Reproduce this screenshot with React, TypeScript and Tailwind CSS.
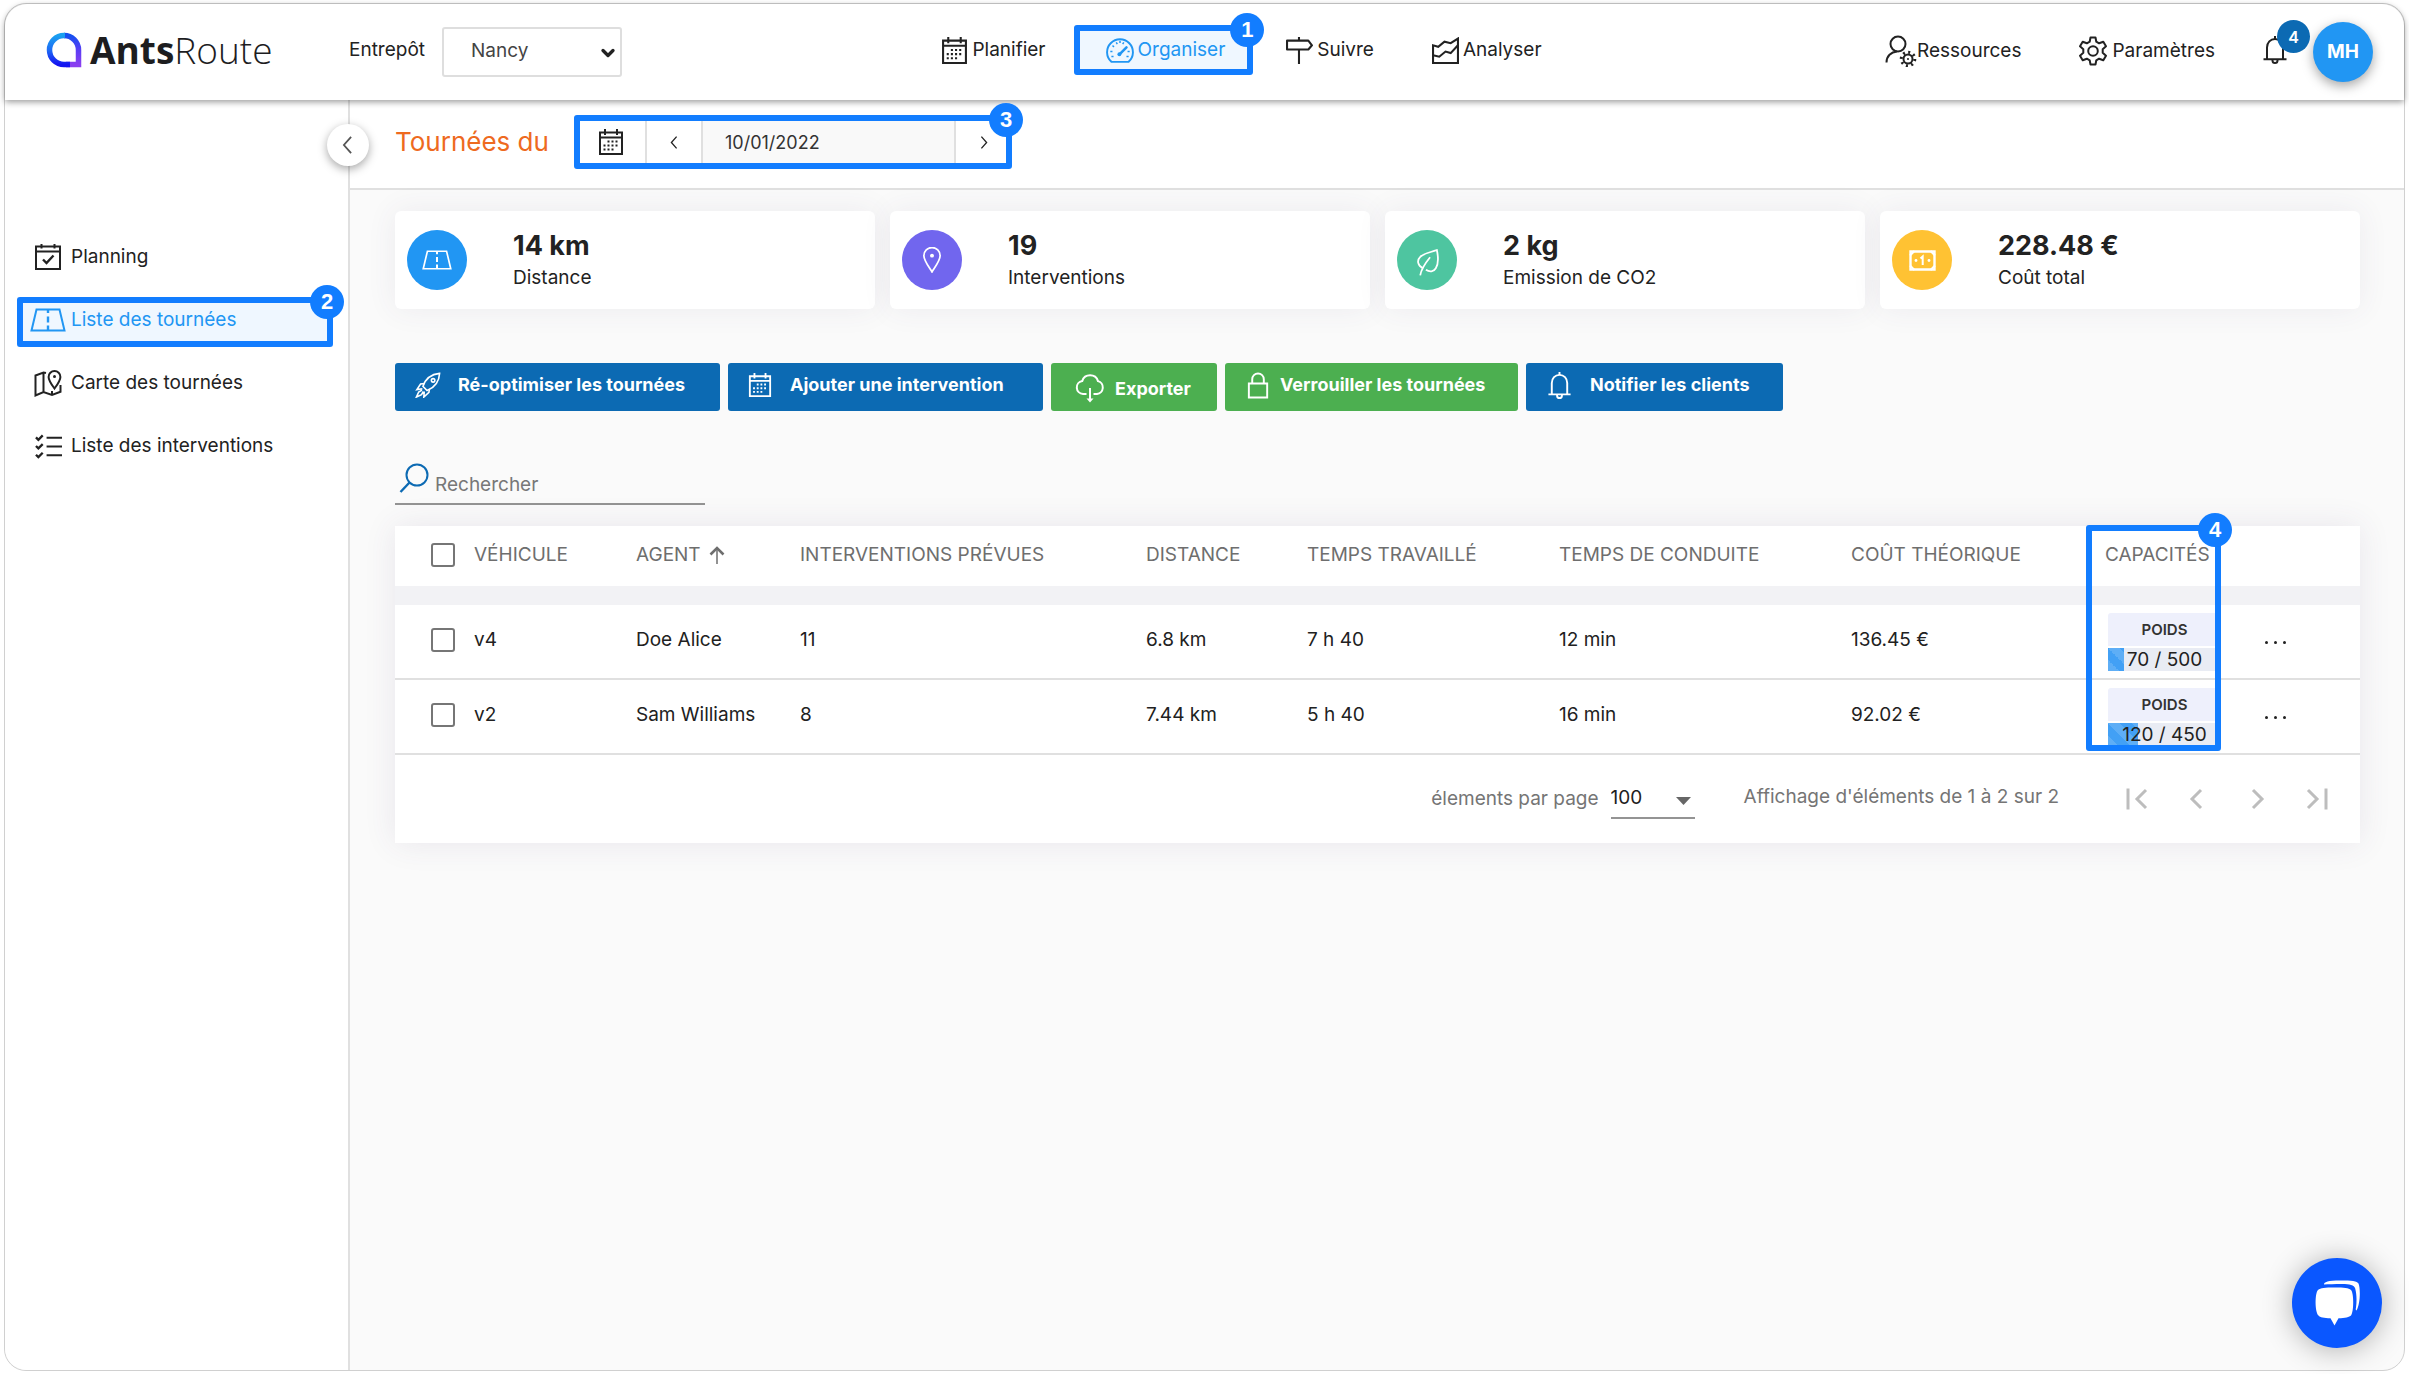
import type { ReactNode } from "react";
import { ChevronDown } from "lucide-react";

type IconProps = { className?: string };

function Icon({
  box = 26,
  stroke = 2,
  className = "",
  children,
}: {
  box?: number;
  stroke?: number;
  className?: string;
  children: ReactNode;
}) {
  return (
    <svg
      viewBox={`0 0 ${box} ${box}`}
      fill="none"
      stroke="currentColor"
      strokeWidth={stroke}
      className={`shrink-0 ${className}`}
      aria-hidden="true"
    >
      {children}
    </svg>
  );
}

function CalendarIcon({ className }: IconProps) {
  return (
    <Icon className={className}>
      <path d="M2 3.500h22V25H2zM2 8.500h22" />
      <path d="M7 0v6M19 0v6" />
      <path d="M9.500 12.500h12M5.500 16.500h16M5.500 20.500h12" strokeDasharray="2 2" />
    </Icon>
  );
}

function GaugeIcon({ className }: IconProps) {
  return (
    <Icon className={className}>
      <path d="M5 24a12 12 0 1 1 16 0z" strokeWidth="1.8" />
      <path d="M12.500 17L19 10.500" strokeWidth="2.4" strokeLinecap="round" />
      <circle cx="12.400" cy="17" r="1.800" fill="currentColor" stroke="none" />
      <path d="M4 14.500h2M20 14.500h2M5 19h2M19 19h2M6 9l1.500 1M9.500 6l1 1.600M13 4.500v2M16.500 6l-1 1.600" strokeWidth="1.4" />
    </Icon>
  );
}

function SignpostIcon({ className }: IconProps) {
  return (
    <Icon className={className}>
      <path d="M1 3.500h20.500L25 8l-3.500 4H1z" strokeLinejoin="round" />
      <path d="M12.500 0v3.500M12.500 12v14" />
    </Icon>
  );
}

function ChartIcon({ className }: IconProps) {
  return (
    <Icon className={className}>
      <path d="M1 25V8l5 1.500L12 4.500l6 1.500 7-4.500V25z" />
      <path d="M1 17.500l6 1.500 6-5 5 1.500L25 8" />
    </Icon>
  );
}

function UserGearIcon({ className }: IconProps) {
  return (
    <Icon box={32} className={className}>
      <circle cx="13" cy="9" r="7.500" />
      <path d="M1.500 27.500C1.500 21 6 17 12 16.500" />
      <circle cx="23" cy="24" r="4.500" />
      <circle cx="23" cy="24" r="1" fill="currentColor" stroke="none" />
      <circle cx="23" cy="24" r="6.800" strokeDasharray="2 3.340" strokeWidth="3" />
    </Icon>
  );
}

function GearIcon({ className }: IconProps) {
  return (
    <Icon box={30} className={className}>
      <circle cx="15" cy="15" r="4.800" />
      <path
        strokeLinejoin="round"
        d="M12.500 1.500h5l.8 4.200 2.800 1.600 4.200-1.600 2.700 4.600-3.300 2.900v3.600l3.300 2.900-2.700 4.600-4.200-1.600-2.800 1.600-.8 4.200h-5l-.8-4.200-2.800-1.600-4.200 1.600L2 19.700l3.300-2.900v-3.600L2 10.300l2.700-4.600 4.200 1.600 2.800-1.600z"
      />
    </Icon>
  );
}

function BellIcon({ className }: IconProps) {
  return (
    <Icon box={28} className={className}>
      <path d="M6 23V11.500C6 6.500 9.500 3 14 3s8 3.500 8 8.500V23" />
      <path d="M2.500 23.200h23M14 0v3" />
      <path d="M11.500 23.500v1a2.500 2.500 0 0 0 5 0v-1" />
    </Icon>
  );
}

function PlanningIcon({ className }: IconProps) {
  return (
    <Icon className={className}>
      <path d="M1 2.500h24V25H1zM1 7.500h24M6.500 0v4.500M19.500 0v4.500" />
      <path d="M8 15.500l3.500 3.500 7-7.500" strokeWidth="2.400" />
    </Icon>
  );
}

function RoadIcon({ className }: IconProps) {
  return (
    <svg viewBox="0 0 36 24" fill="none" stroke="currentColor" strokeWidth="2" className={className} aria-hidden="true">
      <path d="M6.500 1.500h23L34.500 22.500h-33z" />
      <path d="M18 1.500V5M18 8.500v6M18 17.500v5" strokeWidth="2.400" />
    </svg>
  );
}

function MapIcon({ className }: IconProps) {
  return (
    <Icon box={28} className={className}>
      <path d="M12 4L9.500 3.500 1.500 6.500V26.500l8-3.500 8.500 3 8.500-3.200V16M9.500 3.500V23M18 22v4" />
      <path d="M20.500 19.500c-3.600-5-5.900-8-5.900-11.600a5.900 5.900 0 0 1 11.800 0c0 3.600-2.300 6.600-5.900 11.600z" />
      <circle cx="20.500" cy="7.500" r="1.500" fill="currentColor" stroke="none" />
    </Icon>
  );
}

function ChecklistIcon({ className }: IconProps) {
  return (
    <Icon box={28} className={className}>
      <path d="M12 5h16M12 14h16M12 23h16" />
      <path d="M1 4.500L3.500 7 8 2.500M1 13.500L3.500 16 8 11.500M1 22.500L3.500 25 8 20.500" strokeWidth="2.400" />
    </Icon>
  );
}

function PinIcon({ className }: IconProps) {
  return (
    <Icon box={24} stroke={1.6} className={className}>
      <path d="M12 23C7.500 16 4.500 12 4.500 8a7.500 7.500 0 0 1 15 0c0 4-3 8-7.500 15z" />
      <circle cx="12" cy="8" r="1.800" fill="currentColor" stroke="none" />
    </Icon>
  );
}

function LeafIcon({ className }: IconProps) {
  return (
    <Icon box={26} stroke={1.7} className={className}>
      <path d="M8.500 18.500C3.500 16 2.500 11 6 7.500 9 4.300 15 3.500 22 1c1.500 7 1.500 13.500-1 17.500-2 3.500-6 4-9.500 1.500" />
      <path d="M15.500 8C11 13.500 7 18.500 6 25.500" />
    </Icon>
  );
}

function BanknoteIcon({ className }: IconProps) {
  return (
    <svg viewBox="0 0 27 21" fill="none" stroke="currentColor" strokeWidth="2" className={className} aria-hidden="true">
      <path d="M1.500 1.500h24v18h-24z" strokeWidth="2.400" />
      <path d="M5.500 1L1 5.500M21.500 1L26 5.500M5.500 20L1 15.500M21.500 20l4.500-4.500" />
      <path d="M11.500 8.500L13.700 6.500v8.500" />
      <circle cx="7" cy="10.500" r="1.400" fill="currentColor" stroke="none" />
      <circle cx="20" cy="10.500" r="1.400" fill="currentColor" stroke="none" />
    </svg>
  );
}

function RocketIcon({ className }: IconProps) {
  return (
    <Icon box={28} stroke={1.7} className={className}>
      <path d="M8.500 15.500C11 8 17 2.500 26.500 1.500 26 11 20.500 17 13 20z" />
      <circle cx="19.500" cy="9" r="1.900" />
      <path d="M10 12.500L6 13 2 19l6-1M15.500 18.500L15 22l-5.500 5 .5-6M7.500 19.500L4 21.500 1.500 27l5.500-2.500 2-3.500" />
    </Icon>
  );
}

function CloudIcon({ className }: IconProps) {
  return (
    <Icon box={30} className={className}>
      <path d="M11.500 20H8a6.500 6.500 0 0 1-.8-12.900 8.300 8.300 0 0 1 15.800 0A6.600 6.600 0 0 1 22 20h-3.500" />
      <path d="M15 14v12" />
      <path d="M11.500 24.500h7L15 28.500z" fill="currentColor" stroke="none" />
    </Icon>
  );
}

function LockIcon({ className }: IconProps) {
  return (
    <Icon box={28} className={className}>
      <path d="M4 12h19v14.500H4zM7.500 12V7.500a6 6 0 0 1 12 0V12" />
    </Icon>
  );
}

function SearchIcon({ className }: IconProps) {
  return (
    <Icon box={30} className={className}>
      <circle cx="18" cy="12" r="10.500" />
      <path d="M10.500 19.500L1.500 29" strokeWidth="2.400" />
    </Icon>
  );
}

function ChevronIcon({ className, right = false }: IconProps & { right?: boolean }) {
  return (
    <svg viewBox="0 0 12 20" fill="none" stroke="currentColor" strokeWidth="2" className={className} aria-hidden="true">
      <path d={right ? "M2 1l8 9-8 9" : "M10 1l-8 9 8 9"} />
    </svg>
  );
}

function ArrowUpIcon({ className }: IconProps) {
  return (
    <svg viewBox="0 0 16 18" fill="none" stroke="currentColor" className={className} aria-hidden="true">
      <path d="M1.500 8.500L8 2l6.500 6.500" strokeWidth="2.600" />
      <path d="M8 2v16" strokeWidth="1.500" />
    </svg>
  );
}

function PagerIcon({ right = false, end = false }: { right?: boolean; end?: boolean }) {
  return (
    <svg viewBox="0 0 24 24" fill="none" stroke="currentColor" strokeWidth="3" className="size-6" aria-hidden="true">
      <path d={right ? (end ? "M3 3l9 9-9 9" : "M8 3l9 9-9 9") : end ? "M21 3l-9 9 9 9" : "M16 3l-9 9 9 9"} />
      {end && <path d={right ? "M21 1.500v21" : "M3 1.500v21"} />}
    </svg>
  );
}

function Logo() {
  return (
    <a href="#" className="flex items-center gap-2 text-[#1d1d1f]">
      <svg viewBox="0 0 36 36" className="size-9" fill="none" aria-hidden="true">
        <defs>
          <linearGradient id="logo-right" x1="0" y1="0" x2="0" y2="1">
            <stop offset="0" stopColor="#1550f0" />
            <stop offset="0.500" stopColor="#5a3df5" />
            <stop offset="1" stopColor="#8a3ff0" />
          </linearGradient>
          <linearGradient id="logo-left" x1="0" y1="0" x2="0" y2="1">
            <stop offset="0" stopColor="#1aa0f0" />
            <stop offset="0.500" stopColor="#1e6cf5" />
            <stop offset="1" stopColor="#1414f0" />
          </linearGradient>
        </defs>
        <path d="M18 3.500a14.500 14.500 0 0 1 14.500 14.500V32.500H20" stroke="url(#logo-right)" strokeWidth="5.500" />
        <path d="M24 32.500h-6A14.500 14.500 0 0 1 18 3.500h1" stroke="url(#logo-left)" strokeWidth="5.500" />
      </svg>
      <span className="font-['Open_Sans',sans-serif] text-[37px] font-light">
        <b className="font-bold">Ants</b>Route
      </span>
    </a>
  );
}

// Numbered frame laid over the element it explains
function Callout({ step, className = "-inset-1.5" }: { step: number; className?: string }) {
  return (
    <span className={`pointer-events-none absolute z-30 rounded-[3px] border-6 border-[#127dff] ${className}`}>
      <span className="absolute -top-[18px] -right-[17px] flex size-[34px] items-center justify-center rounded-full bg-[#127dff] font-['Liberation_Sans',sans-serif] text-[22px] font-bold leading-none text-white">
        {step}
      </span>
    </span>
  );
}

const stats = [
  { value: "14 km", label: "Distance", color: "bg-[#2196f3]", icon: <RoadIcon className="w-[30px]" /> },
  { value: "19", label: "Interventions", color: "bg-[#7166ee]", icon: <PinIcon className="size-[26px]" /> },
  { value: "2 kg", label: "Emission de CO2", color: "bg-[#4ec5a0]", icon: <LeafIcon className="mt-1 size-[27px]" /> },
  { value: "228.48 €", label: "Coût total", color: "bg-[#ffc233]", icon: <BanknoteIcon className="w-[27px]" /> },
];

const routes = [
  { id: "v4", agent: "Doe Alice", stops: 11, distance: "6.8 km", worked: "7 h 40", driving: "12 min", cost: "136.45 €", load: 70, max: 500 },
  { id: "v2", agent: "Sam Williams", stops: 8, distance: "7.44 km", worked: "5 h 40", driving: "16 min", cost: "92.02 €", load: 120, max: 450 },
];

const checkbox =
  "block size-6 appearance-none rounded-[3px] border-2 border-[#767676] bg-white checked:bg-[#0c6ab3]";

const th = "h-[79px] border-b-[19px] border-[#f2f2f5] p-0 pb-0.5 font-normal whitespace-nowrap";
const td = "border-b-2 border-[#e0e0e0] p-0 pb-1 whitespace-nowrap";

function Header() {
  return (
    <header className="relative z-20 flex h-24 items-center justify-between rounded-t-[22px] bg-white pr-[31px] pl-[41px] shadow-[0_2px_6px_rgba(0,0,0,0.4)]">
      <div className="flex items-center">
        <div className="w-[303px] pb-1">
          <Logo />
        </div>
        <label htmlFor="depot" className="w-[93px] pb-1">
          Entrepôt
        </label>
        <div className="relative">
          <select
            id="depot"
            className="h-[50px] w-[180px] appearance-none rounded-[3px] border-2 border-[#dedede] bg-white pb-0.5 pl-[27px] text-[#444]"
          >
            <option>Nancy</option>
          </select>
          <ChevronDown className="pointer-events-none absolute top-4 right-1 size-5" strokeWidth={4} />
        </div>
      </div>

      <nav className="flex items-center gap-[34px] pr-6 pb-1">
        <a href="#" className="flex items-center gap-1">
          <CalendarIcon className="size-[27px]" />
          Planifier
        </a>
        <a href="#" className="relative mr-[5px] flex h-[38px] items-center gap-1 bg-[#eff7ff] pr-[22px] pl-[26px] text-[#2196f3]">
          <GaugeIcon className="size-[28px]" />
          Organiser
          <Callout step={1} />
        </a>
        <a href="#" className="mr-6 flex items-center gap-1">
          <SignpostIcon className="size-[27px]" />
          Suivre
        </a>
        <a href="#" className="flex items-center gap-1">
          <ChartIcon className="size-[27px]" />
          Analyser
        </a>
      </nav>

      <div className="flex items-center">
        <a href="#" className="mr-[57px] flex items-center pb-0.5">
          <UserGearIcon className="size-8" />
          Ressources
        </a>
        <a href="#" className="mr-[46px] flex items-center gap-1 pb-0.5">
          <GearIcon className="size-[30px]" />
          Paramètres
        </a>
        <button type="button" aria-label="Notifications" className="relative mr-[24px] pb-1">
          <BellIcon className="size-[28px]" />
          <span className="absolute -top-4 left-4 flex size-[33px] items-center justify-center rounded-full bg-[#0c6ab3] text-base font-semibold text-white">
            4
          </span>
        </button>
        <button
          type="button"
          className="size-[60px] rounded-full bg-[#2196f3] font-bold text-white shadow-[0_4px_12px_rgba(0,0,0,0.35)]"
        >
          MH
        </button>
      </div>
    </header>
  );
}

function Sidebar() {
  const item = "relative flex h-[50px] items-center gap-[5px] pl-[13px] pb-1";
  return (
    <aside className="relative w-[345px] shrink-0 rounded-bl-[22px] border-r-2 border-[#e0e0e0] bg-white">
      <nav className="flex flex-col gap-[13px] pt-[134px] pr-[15px] pl-3">
        <a href="#" className={item}>
          <span className="flex w-9 justify-center">
            <PlanningIcon className="size-[26px]" />
          </span>
          Planning
        </a>
        <a href="#" className={`${item} bg-[#eff7ff] text-[#2196f3]`}>
          <RoadIcon className="w-9" />
          Liste des tournées
          <Callout step={2} className="inset-0" />
        </a>
        <a href="#" className={item}>
          <span className="flex w-9 justify-center">
            <MapIcon className="size-[28px]" />
          </span>
          Carte des tournées
        </a>
        <a href="#" className={item}>
          <span className="flex w-9 justify-center">
            <ChecklistIcon className="size-[27px]" />
          </span>
          Liste des interventions
        </a>
      </nav>
      <button
        type="button"
        aria-label="Réduire le menu"
        className="absolute top-6 -right-[21px] z-10 flex size-[42px] items-center justify-center rounded-full bg-white pr-0.5 text-[#555] shadow-[0_3px_10px_rgba(0,0,0,0.35)]"
      >
        <ChevronIcon className="h-[18px] w-[11px]" />
      </button>
    </aside>
  );
}

function TitleBar() {
  return (
    <div className="flex h-[90px] items-center border-b-2 border-[#e0e0e0] bg-white pr-11 pb-1 pl-[45px]">
      <h1 className="w-[185px] text-[26px] whitespace-nowrap text-[#ee6a1f]">Tournées du</h1>
      <div className="relative flex h-[42px] w-[426px]">
        <button type="button" aria-label="Calendrier" className="flex w-[67px] items-center justify-center border-r-2 border-[#e0e0e0] pr-1">
          <CalendarIcon className="size-[26px]" />
        </button>
        <button type="button" aria-label="Jour précédent" className="flex w-[54px] items-center justify-center">
          <ChevronIcon className="h-[13px] w-[8px]" />
        </button>
        <input
          aria-label="Date"
          defaultValue="10/01/2022"
          className="w-0 grow border-x-2 border-[#e0e0e0] bg-[#f9f9f9] pt-0.5 pl-[22px] text-lg text-[#333] outline-none"
        />
        <button type="button" aria-label="Jour suivant" className="flex w-[50px] items-center justify-center pl-1.5">
          <ChevronIcon right className="h-[13px] w-[8px]" />
        </button>
        <Callout step={3} />
      </div>
    </div>
  );
}

function RoutesTable() {
  return (
    <div className="mt-[21px] bg-white shadow-[0_0_30px_rgba(82,63,105,0.10)]">
      <table className="w-full table-fixed border-separate border-spacing-0 text-left">
        <thead className="text-[#6e6e6e]">
          <tr>
            <th className={`${th} w-[79px] pl-9`}>
              <input type="checkbox" aria-label="Tout sélectionner" className={checkbox} />
            </th>
            <th className={`${th} w-[162px]`}>VÉHICULE</th>
            <th className={`${th} w-[164px]`}>
              <button type="button" className="flex items-center gap-2">
                AGENT
                <ArrowUpIcon className="h-[18px] w-4" />
              </button>
            </th>
            <th className={`${th} w-[346px]`}>INTERVENTIONS PRÉVUES</th>
            <th className={`${th} w-[161px]`}>DISTANCE</th>
            <th className={`${th} w-[252px]`}>TEMPS TRAVAILLÉ</th>
            <th className={`${th} w-[292px]`}>TEMPS DE CONDUITE</th>
            <th className={`${th} w-[254px]`}>COÛT THÉORIQUE</th>
            <th className={`${th} relative w-40`}>
              CAPACITÉS
              <Callout step={4} className="-top-px -left-[19px] h-[226px] w-[135px]" />
            </th>
            <th className={`${th} w-[95px]`} aria-label="Actions" />
          </tr>
        </thead>
        <tbody className="text-[#212121]">
          {routes.map((route) => (
            <tr key={route.id} className="h-[75px]">
              <td className={`${td} pl-9`}>
                <input type="checkbox" aria-label={`Sélectionner ${route.id}`} className={checkbox} />
              </td>
              <td className={td}>{route.id}</td>
              <td className={td}>{route.agent}</td>
              <td className={td}>{route.stops}</td>
              <td className={td}>{route.distance}</td>
              <td className={td}>{route.worked}</td>
              <td className={td}>{route.driving}</td>
              <td className={td}>{route.cost}</td>
              <td className="border-b-2 border-[#e0e0e0] p-0 pl-[3px]">
                <div className="flex w-[113px] flex-col gap-0.5 text-center">
                  <div className="rounded-t-[3px] bg-[#eef0fc] text-[15px] leading-[33px] font-semibold text-[#333]">POIDS</div>
                  <div className="relative h-[23px] bg-[#e9ecf4]">
                    <div
                      className="h-full bg-[#42a0f5] bg-[linear-gradient(45deg,rgba(255,255,255,0.15)_25%,transparent_25%,transparent_50%,rgba(255,255,255,0.15)_50%,rgba(255,255,255,0.15)_75%,transparent_75%)] bg-size-[24px_24px]"
                      style={{ width: `${(route.load / route.max) * 100}%` }}
                    />
                    <span className="absolute inset-0 leading-6">
                      {route.load} / {route.max}
                    </span>
                  </div>
                </div>
              </td>
              <td className={td}>
                <button type="button" aria-label="Plus d'actions" className="mt-1.5 flex gap-1.5">
                  <i className="size-[3px] rounded-full bg-[#212121]" />
                  <i className="size-[3px] rounded-full bg-[#212121]" />
                  <i className="size-[3px] rounded-full bg-[#212121]" />
                </button>
              </td>
            </tr>
          ))}
        </tbody>
      </table>

      <div className="flex h-[88px] items-center justify-end pr-[31px] text-[#757575]">
        <label htmlFor="page-size" className="mr-3">
          élements par page
        </label>
        <div className="relative mr-[49px] text-[#212121]">
          <select id="page-size" className="h-10 w-[84px] appearance-none border-b-2 border-[#949494]">
            <option>100</option>
          </select>
          <svg viewBox="0 0 15 8" className="pointer-events-none absolute top-[18px] right-1 h-2 w-[15px]" fill="#666" aria-hidden="true">
            <path d="M0 0h15L7.500 8z" />
          </svg>
        </div>
        <span className="mr-[66px] pb-1">Affichage d'éléments de 1 à 2 sur 2</span>
        <div className="flex gap-9 text-[#bdbdbd]">
          <button type="button" aria-label="Première page">
            <PagerIcon end />
          </button>
          <button type="button" aria-label="Page précédente">
            <PagerIcon />
          </button>
          <button type="button" aria-label="Page suivante">
            <PagerIcon right />
          </button>
          <button type="button" aria-label="Dernière page">
            <PagerIcon right end />
          </button>
        </div>
      </div>
    </div>
  );
}

export default function App() {
  const btn = "flex h-12 items-center rounded-[3px] text-lg font-bold whitespace-nowrap text-white";

  return (
    <div className="flex min-h-screen bg-white px-1 py-[3px] font-['Inter','Noto_Sans',sans-serif] text-[19px] leading-6 text-[#222]">
      <div className="relative flex grow flex-col rounded-[22px] border border-[#d0d0d0] bg-[#fafafa]">
        <Header />
        <div className="flex grow">
          <Sidebar />
          <main className="min-w-0 grow">
            <TitleBar />
            <div className="pt-[21px] pr-11 pl-[45px]">
              <div className="grid grid-cols-4 gap-[15px]">
                {stats.map((stat) => (
                  <div
                    key={stat.label}
                    className="flex h-[98px] items-center gap-[46px] rounded-md bg-white pl-3 shadow-[0_0_30px_rgba(82,63,105,0.08)]"
                  >
                    <span className={`flex size-[60px] items-center justify-center rounded-full text-white ${stat.color}`}>
                      {stat.icon}
                    </span>
                    <div className="pt-1">
                      <div className="text-[27px] leading-8 font-bold">{stat.value}</div>
                      <div className="leading-8">{stat.label}</div>
                    </div>
                  </div>
                ))}
              </div>

              <div className="mt-[54px] flex gap-2">
                <button type="button" className={`${btn} w-[325px] bg-[#0c6ab3] pb-1 pl-5`}>
                  <RocketIcon className="mr-[17px] size-[26px]" />
                  Ré-optimiser les tournées
                </button>
                <button type="button" className={`${btn} w-[315px] bg-[#0c6ab3] pb-1 pl-5`}>
                  <CalendarIcon className="mr-[18px] size-6" />
                  Ajouter une intervention
                </button>
                <button type="button" className={`${btn} w-[166px] bg-[#4caf50] pt-1 pl-6`}>
                  <CloudIcon className="mr-2.5 size-[30px]" />
                  Exporter
                </button>
                <button type="button" className={`${btn} w-[293px] bg-[#4caf50] pb-1 pl-5`}>
                  <LockIcon className="mr-2 size-[27px]" />
                  Verrouiller les tournées
                </button>
                <button type="button" className={`${btn} w-[257px] bg-[#0c6ab3] pb-1 pl-5`}>
                  <BellIcon className="mr-[17px] size-[27px]" />
                  Notifier les clients
                </button>
              </div>

              <div className="mt-[45px] flex h-[49px] w-[310px] items-center border-b-2 border-[#949494] pl-1">
                <SearchIcon className="mb-1 size-[30px] text-[#0c6ab3]" />
                <input
                  type="search"
                  aria-label="Rechercher"
                  placeholder="Rechercher"
                  className="w-0 grow bg-transparent pt-2.5 pl-1.5 outline-none placeholder:text-[#777]"
                />
              </div>

              <RoutesTable />
            </div>
          </main>
        </div>

        <button
          type="button"
          aria-label="Ouvrir le chat"
          className="absolute right-[22px] bottom-[22px] flex size-[90px] items-center justify-center rounded-full bg-[#0a57ff] shadow-[0_2px_30px_rgba(0,0,0,0.3)]"
        >
          <svg viewBox="0 0 46 46" className="size-[46px]" fill="#fff" aria-hidden="true">
            <path d="M10 4.500C10 2 14 .5 26 .5s17 .5 18.500 3C46.500 8 46.500 24 42.500 30.500c-1-.5-.8-1.500-.5-3 .8-6 .8-13-.8-19C40 5 36 4 28 4c-8 0-13 .2-18 .5z" />
            <path d="M20.500 7.500c10 0 14 .3 16.500 2.500C40 13 40 32 37 35.500c-1.500 1.700-6 2.500-12.500 2.800L20.500 45.500 16.500 38.300C10 38 6 37.500 4.500 35.500 .8 32 .8 13 4 10 6.500 7.800 11 7.500 20.500 7.500z" />
          </svg>
        </button>
      </div>
    </div>
  );
}
